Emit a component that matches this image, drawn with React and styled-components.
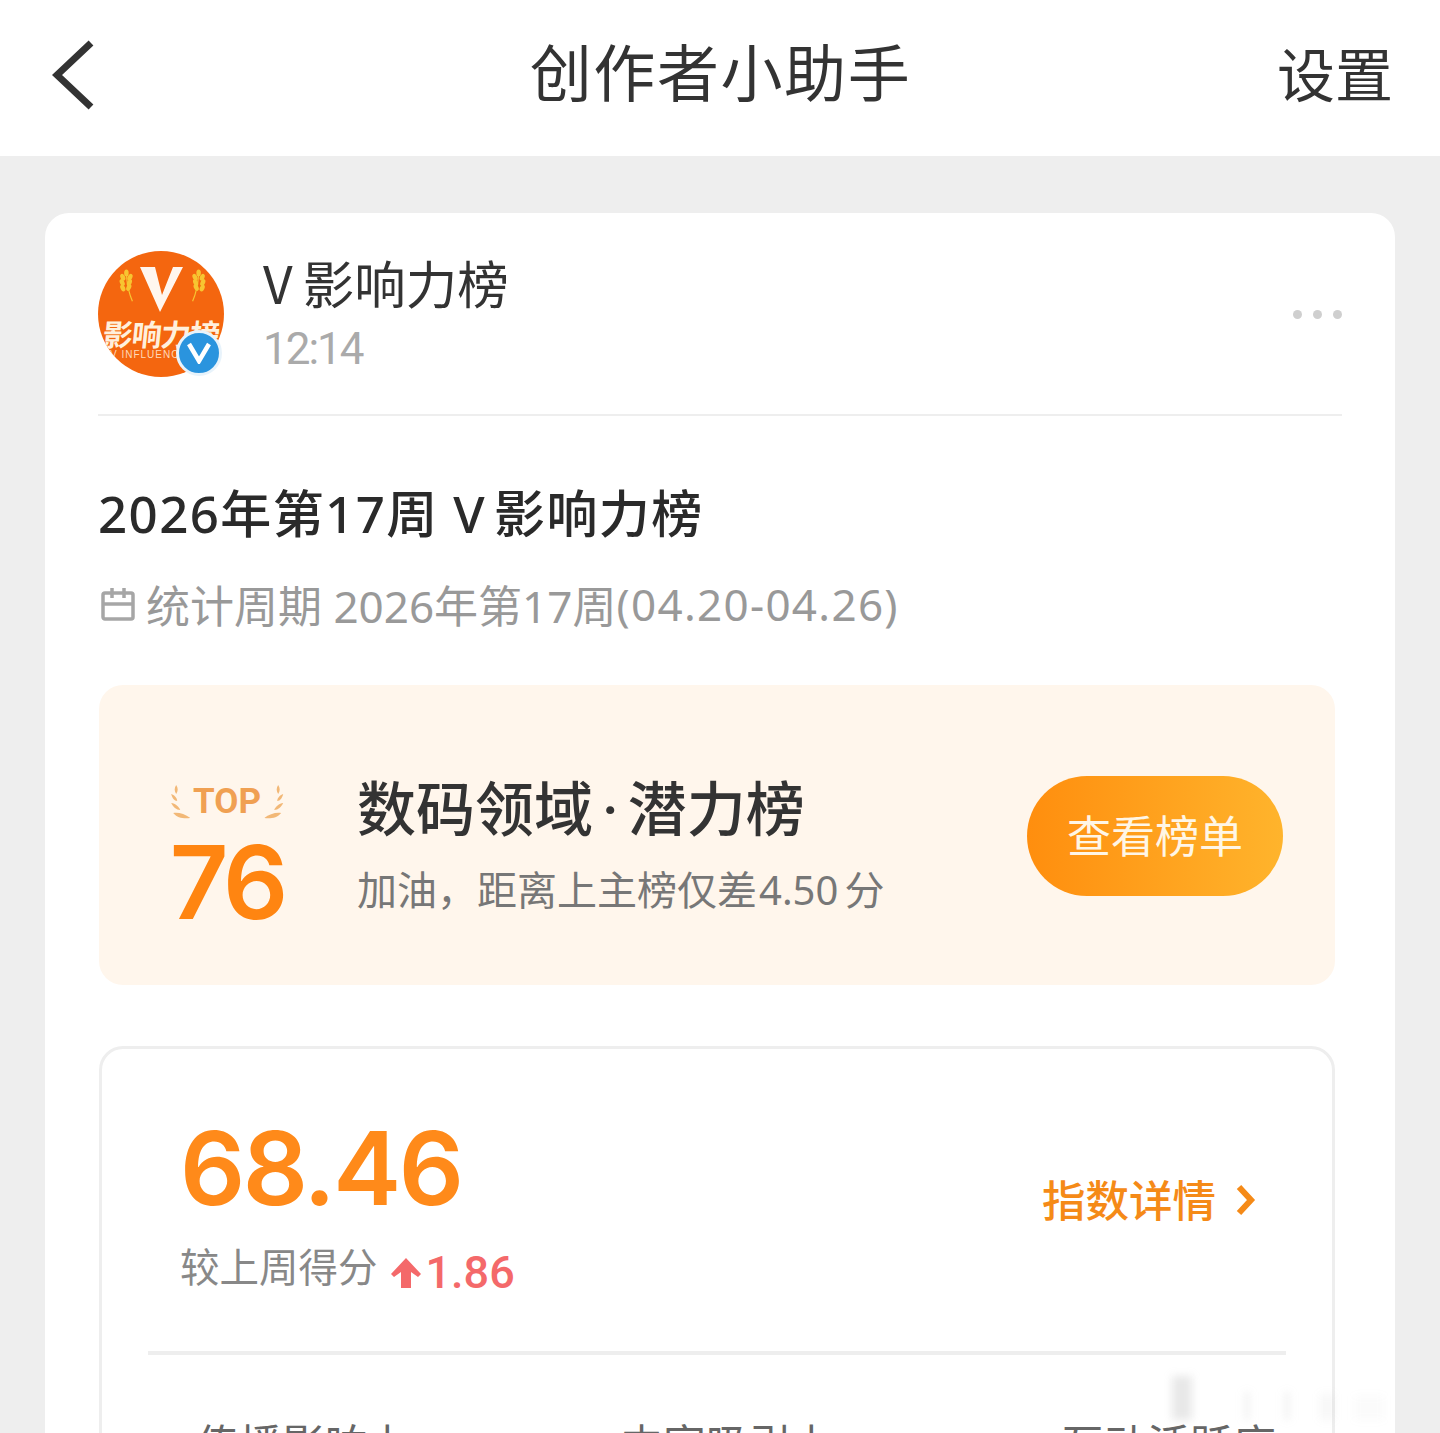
import React from 'react'
import styled, { createGlobalStyle } from 'styled-components'

const Global = createGlobalStyle`
  html, body { margin: 0; padding: 0; background: #eeeeee; }
  body { font-family: "Noto Sans CJK SC", "Noto Sans", sans-serif; }
  * { box-sizing: border-box; }
`

const Page = styled.div`
  width: 1440px;
  height: 1433px;
  overflow: hidden;
  position: relative;
  background: #eeeeee;
`

const NavBar = styled.header`
  height: 156px;
  background: #fff;
  display: grid;
  grid-template-columns: 1fr auto 1fr;
  align-items: center;
  padding: 0 47px 10px 52px;
`

const BackButton = styled.div`
  display: flex;
  align-items: center;
  margin-top: 4px;
`

const NavTitle = styled.h1`
  margin: -6px 4px 0 0;
  font-size: 62px;
  font-weight: 400;
  color: #333;
  letter-spacing: 1.6px;
  line-height: 1;
`

const NavAction = styled.div`
  justify-self: end;
  margin-top: -2px;
  font-size: 58px;
  color: #333;
  line-height: 1;
`

const Card = styled.main`
  margin: 57px 45px 0;
  background: #fff;
  border-radius: 24px;
  padding: 38px 53px 0 53px;
  height: 1300px;
`

const AuthorRow = styled.div`
  display: flex;
  align-items: flex-start;
  height: 165px;
  border-bottom: 2px solid #eeeeee;
`

const Avatar = styled.div`
  position: relative;
  width: 126px;
  height: 126px;
  border-radius: 50%;
  background: #f4660f;
  flex: none;
  color: #fff;
`

const AvatarClip = styled.div`
  position: absolute;
  inset: 0;
  border-radius: 50%;
  overflow: hidden;
  display: flex;
  flex-direction: column;
  align-items: center;
`

const AvatarLogo = styled.svg`
  flex: none;
`

const AvatarName = styled.div`
  font-size: 30px;
  font-weight: 700;
  line-height: 30px;
  letter-spacing: -1px;
  white-space: nowrap;
  margin-top: 5px;
  color: #fff0dc;
  transform: skewX(-6deg);
`

const AvatarSub = styled.div`
  font-family: "Liberation Sans", sans-serif;
  font-size: 10px;
  line-height: 10px;
  letter-spacing: 1px;
  white-space: nowrap;
  align-self: flex-start;
  margin: 2px 0 0 12px;
  color: #ffd9b8;
`

const Badge = styled.div`
  position: absolute;
  right: 2px;
  bottom: 1px;
  width: 46px;
  height: 46px;
  border-radius: 50%;
  border: 3px solid #e8f3fb;
  background: #2a94de;
  display: flex;
  align-items: center;
  justify-content: center;
`

const AuthorInfo = styled.div`
  margin-left: 39px;
  flex: 1;
`

const AuthorName = styled.div`
  font-size: 51.5px;
  line-height: 64px;
  color: #333;
  margin-top: -1px;
`

const LatinV = styled.span`
  margin-right: ${p => p.$gap}px;
`

const AuthorTime = styled.div`
  font-family: "Roboto", sans-serif;
  font-size: 44px;
  line-height: 60px;
  letter-spacing: -2px;
  color: #aaaaaa;
  margin-top: 5px;
`

const MoreDots = styled.div`
  display: flex;
  gap: 11px;
  margin-top: 59px;
`

const Dot = styled.span`
  width: 9px;
  height: 9px;
  border-radius: 50%;
  background: #cfcfcf;
`

const PostTitle = styled.h2`
  margin: 59px 0 0;
  font-family: "Noto Sans", "Noto Sans CJK SC", sans-serif;
  font-size: 51px;
  font-weight: 500;
  line-height: 76px;
  letter-spacing: 1.4px;
  color: #2a2a2a;
  white-space: nowrap;
`

const Period = styled.div`
  display: flex;
  align-items: center;
  margin-top: 23px;
  height: 60px;
  font-family: "Noto Sans", "Noto Sans CJK SC", sans-serif;
  font-size: 44px;
  color: #999;
  white-space: pre;
`

const PeriodRange = styled.span`
  letter-spacing: 1.3px;
`

const PeriodIcon = styled.svg`
  margin: 0 11px 0 3px;
  flex: none;
`

const RankBanner = styled.section`
  margin: 51px 7px 0 1px;
  height: 300px;
  border-radius: 24px;
  background: #fff6ec;
  display: flex;
  align-items: center;
  padding: 0 52px 0 72px;
`

const RankBlock = styled.div`
  width: 112px;
  flex: none;
  display: flex;
  flex-direction: column;
  align-items: center;
  margin-top: 45px;
`

const TopRow = styled.div`
  display: flex;
  align-items: center;
  gap: 3px;
  font-family: "Roboto", sans-serif;
  font-weight: 700;
  font-size: 35px;
  line-height: 38px;
  color: #f0a052;
`

const RankNumber = styled.div`
  font-family: "Inter", sans-serif;
  font-weight: 600;
  font-size: 102px;
  line-height: 100px;
  color: #ff8511;
  letter-spacing: -4px;
  margin-top: 11px;
`

const RankText = styled.div`
  margin: 14px 0 0 74px;
  flex: 1;
`

const RankTitle = styled.div`
  font-size: 59px;
  font-weight: 500;
  line-height: 76px;
  color: #333;
  white-space: nowrap;
`

const TitleDot = styled.span`
  font-family: "Roboto", sans-serif;
  margin: 0 9px;
`

const RankHint = styled.div`
  font-family: "Noto Sans", "Noto Sans CJK SC", sans-serif;
  font-size: 40px;
  line-height: 54px;
  color: #777;
  margin-top: 14px;
  white-space: nowrap;
`

const HintNumber = styled.span`
  margin: 0 6px 0 2px;
`

const RankButton = styled.div`
  width: 256px;
  height: 120px;
  margin-top: 2px;
  padding-bottom: 4px;
  border-radius: 60px;
  background: linear-gradient(90deg, #ff8e0e, #ffb42c);
  display: flex;
  align-items: center;
  justify-content: center;
  color: #fff6e6;
  font-size: 44px;
  flex: none;
`

const ScoreCard = styled.section`
  margin: 61px 7px 0 1px;
  border: 3px solid #eeeeee;
  border-radius: 24px;
  height: 600px;
  padding: 0 46px;
`

const ScoreRow = styled.div`
  height: 306px;
  display: flex;
  justify-content: space-between;
  border-bottom: 4px solid #eeeeee;
  padding: 0 30px 0 32px;
`

const ScoreValue = styled.div`
  font-family: "Inter", sans-serif;
  font-size: 102px;
  font-weight: 600;
  line-height: 110px;
  letter-spacing: -2.500px;
  color: #ff8a1a;
  margin-top: 64px;
`

const ScoreDiff = styled.div`
  display: flex;
  align-items: flex-start;
  margin-top: 15px;
  font-size: 39.5px;
  line-height: 54px;
  color: #888;
`

const DiffValue = styled.span`
  display: flex;
  align-items: center;
  gap: 4px;
  margin: 8px 0 0 12px;
  font-family: "Roboto", sans-serif;
  font-size: 45px;
  font-weight: 500;
  color: #f4696a;
`

const DetailLink = styled.div`
  display: flex;
  align-items: center;
  gap: 20px;
  height: 60px;
  margin-top: 119px;
  font-size: 43.5px;
  font-weight: 500;
  color: #f58a17;
`

const Chevron = styled.svg`
  margin-top: 4px;
`

const Metrics = styled.div`
  display: grid;
  grid-template-columns: 424px 441px auto;
  padding: 57px 0 0 48px;
`

const Metric = styled.div`
  font-size: 43px;
  line-height: 60px;
  color: #666;
`

const Watermark = styled.div`
  position: absolute;
  left: 1164px;
  top: 1376px;
  width: 240px;
  height: 44px;
  display: flex;
  align-items: flex-end;
  filter: blur(4px);
  pointer-events: none;
`

const WatermarkBar = styled.span`
  width: ${p => p.$w}px;
  height: ${p => p.$h}px;
  margin-left: ${p => p.$ml}px;
  background: rgba(150, 150, 150, ${p => p.$a});
`

const Wheat = ({ flip, color, size }) => (
  <svg width={size * 0.6} height={size} viewBox="0 0 20 34" style={flip ? { transform: 'scaleX(-1)' } : undefined}>
    <g fill={color}>
      <path d="M6 0C8 3 8 6 6 9 4 6 4 3 6 0z" />
      <path d="M1 9c3 1 6 4 6 7-3 0-5-3-6-7z" />
      <path d="M1 18c4 0 8 4 9 7-4 0-7-3-9-7z" />
      <path d="M3 28c5-1 12 1 17 5-6 1-13 0-17-5z" />
    </g>
  </svg>
)

const grains = [[14, 2, 0], [8, 9, -25], [20, 9, 25], [7, 18, -25], [19, 18, 25], [8, 27, -25], [18, 26, 25]]

const AvatarWheat = ({ x, flip }) => (
  <g transform={`translate(${x} 19)${flip ? ' translate(15 0) scale(-1 1)' : ''} scale(0.6)`}>
    <path d="M14 8c1 14 2 26 10 44" fill="none" stroke="#f7c531" strokeWidth="2" />
    {grains.map(([gx, gy, r]) => (
      <ellipse key={`${gx}-${gy}`} cx={gx} cy={gy + 3} rx="3.800" ry="6" fill="#f7c531" transform={`rotate(${r} ${gx} ${gy + 3})`} />
    ))}
  </g>
)

export default function App() {
  return (
    <Page>
      <Global />
      <NavBar>
        <BackButton>
          <svg width="44" height="72" viewBox="0 0 44 72" fill="none" stroke="#333" strokeWidth="7">
            <path d="M39 4 5 36l34 32" />
          </svg>
        </BackButton>
        <NavTitle>创作者小助手</NavTitle>
        <NavAction>设置</NavAction>
      </NavBar>
      <Card>
        <AuthorRow>
          <Avatar>
            <AvatarClip>
              <AvatarLogo width="126" height="62" viewBox="0 0 126 62">
                <path d="M42 16h15l7 28 11-28h10L62 61z" fill="#fff6ee" />
                <AvatarWheat x={20} />
                <AvatarWheat x={94} flip />
              </AvatarLogo>
              <AvatarName>影响力榜</AvatarName>
              <AvatarSub>V INFLUENCE</AvatarSub>
            </AvatarClip>
            <Badge>
              <svg width="26" height="22" viewBox="0 0 26 22" fill="none" stroke="#fff" strokeWidth="4.500">
                <path d="M3 2l10 17L23 2" />
              </svg>
            </Badge>
          </Avatar>
          <AuthorInfo>
            <AuthorName><LatinV $gap={10}>V</LatinV>影响力榜</AuthorName>
            <AuthorTime>12:14</AuthorTime>
          </AuthorInfo>
          <MoreDots>
            <Dot />
            <Dot />
            <Dot />
          </MoreDots>
        </AuthorRow>
        <PostTitle>2026年第17周 <LatinV $gap={8}>V</LatinV>影响力榜</PostTitle>
        <Period>
          <PeriodIcon width="34" height="34" viewBox="0 0 34 34" fill="none" stroke="#a6a6a6" strokeWidth="3.500">
            <rect x="2" y="6" width="30" height="26" rx="2" />
            <path d="M2 17h30M11 1v10M23 1v10" />
          </PeriodIcon>
          统计周期 2026年第17周<PeriodRange>(04.20-04.26)</PeriodRange>
        </Period>
        <RankBanner>
          <RankBlock>
            <TopRow>
              <Wheat color="#f2b877" size={34} />
              TOP
              <Wheat flip color="#f2b877" size={34} />
            </TopRow>
            <RankNumber>76</RankNumber>
          </RankBlock>
          <RankText>
            <RankTitle>数码领域<TitleDot>·</TitleDot>潜力榜</RankTitle>
            <RankHint>加油，距离上主榜仅差<HintNumber>4.50</HintNumber>分</RankHint>
          </RankText>
          <RankButton>查看榜单</RankButton>
        </RankBanner>
        <ScoreCard>
          <ScoreRow>
            <div>
              <ScoreValue>68.46</ScoreValue>
              <ScoreDiff>
                较上周得分
                <DiffValue>
                  <svg width="32" height="32" viewBox="0 0 32 32" fill="#f4696a">
                    <path d="M16 1 31 17l-3 3-7-5v16H11V15l-7 5-3-3z" />
                  </svg>
                  1.86
                </DiffValue>
              </ScoreDiff>
            </div>
            <DetailLink>
              指数详情
              <Chevron width="20" height="32" viewBox="0 0 20 32" fill="none" stroke="#f58a17" strokeWidth="6">
                <path d="M3 3l12 13L3 29" />
              </Chevron>
            </DetailLink>
          </ScoreRow>
          <Metrics>
            <Metric>传播影响力</Metric>
            <Metric>内容吸引力</Metric>
            <Metric>互动活跃度</Metric>
          </Metrics>
        </ScoreCard>
      </Card>
      <Watermark>
        <WatermarkBar $ml={8} $w={20} $h={44} $a={0.22} />
        <WatermarkBar $ml={52} $w={6} $h={28} $a={0.12} />
        <WatermarkBar $ml={34} $w={6} $h={28} $a={0.12} />
        <WatermarkBar $ml={30} $w={14} $h={26} $a={0.08} />
        <WatermarkBar $ml={20} $w={30} $h={24} $a={0.04} />
      </Watermark>
    </Page>
  )
}
